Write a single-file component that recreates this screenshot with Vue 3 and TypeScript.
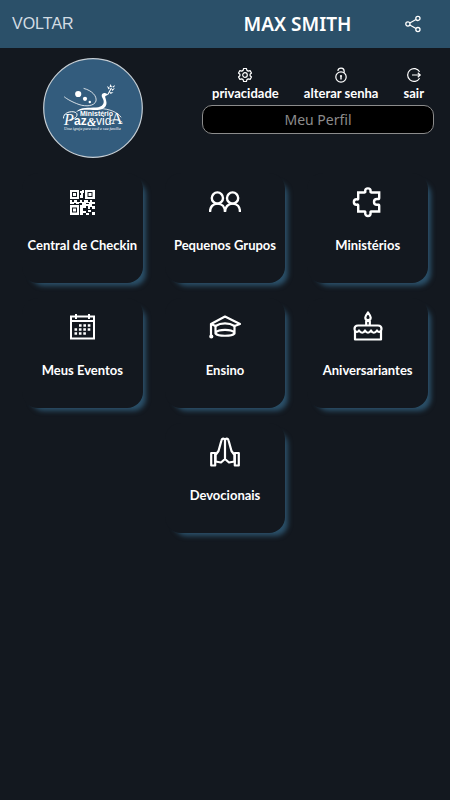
<script setup lang="ts">
type IconName = 'qr' | 'group' | 'puzzle' | 'calendar' | 'cap' | 'cake' | 'pray'

interface MenuItem {
  icon: IconName
  label: string
}

const items: MenuItem[] = [
  { icon: 'qr', label: 'Central de Checkin' },
  { icon: 'group', label: 'Pequenos Grupos' },
  { icon: 'puzzle', label: 'Ministérios' },
  { icon: 'calendar', label: 'Meus Eventos' },
  { icon: 'cap', label: 'Ensino' },
  { icon: 'cake', label: 'Aniversariantes' },
  { icon: 'pray', label: 'Devocionais' },
]
</script>

<template>
  <div class="page">
    <header class="bar">
      <button class="back" type="button">VOLTAR</button>
      <h1 class="title">MAX SMITH</h1>
      <button class="share" type="button" aria-label="Compartilhar">
        <svg width="16" height="18" viewBox="0 0 16 18" fill="none" stroke="currentColor" stroke-width="1.3">
          <circle cx="2.9" cy="9" r="2.1" />
          <circle cx="12.9" cy="3.4" r="2.1" />
          <circle cx="12.9" cy="14.6" r="2.1" />
          <path d="M4.8 8L11 4.5M4.8 10L11 13.5" />
        </svg>
      </button>
    </header>

    <main>
      <section class="profile">
        <svg class="logo" viewBox="0 0 100 100" role="img" aria-label="Ministério Paz e Vida">
          <circle cx="50" cy="50" r="49.3" fill="#335c7d" stroke="#c4cdd4" stroke-width="1.2" />
          <g fill="#fff">
            <circle cx="35.2" cy="36" r="3.1" />
            <circle cx="42" cy="40.8" r="2.1" />
            <circle cx="46.800" cy="44" r="1.2" />
            <path d="M33 54C38 48.500 46 50 53 49.500C60 49 62 45 60 41C57.500 37 59 35 62 35L65.500 36.500L62.500 38C61.500 38.500 63.500 42 63.500 45C63.500 51 57 52.500 50 52C43 51.500 38 51.500 33 54Z" />
            <path d="M64.500 36L68 29.500L69 30L65.500 36.500ZM65.500 31.500L64 28L67 30ZM66.500 29L67.500 26L69 29ZM68.500 31.500L72 30L69.500 33ZM66.500 34L70.500 34.500L67.500 36ZM69 29L72 27L71 29.500Z" />
          </g>
          <g fill="none" stroke="#fff" stroke-linecap="round">
            <path d="M41 30.500C49 32.500 54 38 53 43C51.500 48 43 49 36 46.500C29 44 24 41 21.500 39" stroke-width=".8" />
            <path d="M20.500 60C20 53 33 52 34 56C34.500 60 29 61.500 27 61.500" stroke-width="1" />
            <path d="M57 50.500C67 51 74 54 78 59" stroke-width=".8" />
            <path d="M66 64C68 61 74 61 79 64" stroke-width=".8" />
          </g>
          <g fill="#fff">
            <text x="37" y="58" class="logo-small">Ministério</text>
            <text x="21" y="67" class="logo-script">P</text>
            <text x="31" y="67" class="logo-name">az</text>
            <text x="44" y="68" class="logo-amp">&amp;</text>
            <text x="53" y="67" class="logo-vid">vid</text>
            <text x="68" y="66" class="logo-end">A</text>
            <text x="21" y="72" class="logo-tag">Uma igreja para você e sua família</text>
          </g>
        </svg>
        <div class="account">
          <nav class="actions">
            <a href="#privacidade">
              <svg width="16" height="16" viewBox="0 0 16 16" fill="none" stroke="currentColor" stroke-width="1.2" stroke-linejoin="round">
                <path d="M6.600 1.500H9.400L9.900 3.400L11.200 4.100L13.100 3.600L14.500 6L13.100 7.300V8.700L14.500 10L13.100 12.400L11.200 11.900L9.900 12.600L9.400 14.500H6.600L6.100 12.600L4.800 11.900L2.900 12.400L1.500 10L2.900 8.700V7.300L1.500 6L2.900 3.600L4.800 4.100L6.100 3.400Z" />
                <circle cx="8" cy="8" r="2.300" />
              </svg>
              <span>privacidade</span>
            </a>
            <a href="#senha">
              <svg width="16" height="16" viewBox="0 0 16 16" fill="none" stroke="currentColor" stroke-width="1.200">
                <circle cx="8" cy="10" r="5.200" />
                <path d="M4.800 3.800C5.500 .2 11.200 .2 11.200 4.400V5.800" />
                <path d="M8 9.500V12.500" stroke-width="1.400" />
                <circle cx="8" cy="9" r="1.100" fill="currentColor" stroke="none" />
              </svg>
              <span>alterar senha</span>
            </a>
            <a href="#sair">
              <svg width="16" height="16" viewBox="0 0 16 16" fill="none" stroke="currentColor" stroke-width="1.200">
                <path d="M13.600 4.800A6.400 6.400 0 1 0 13.600 11.200" />
                <path d="M6 8H14M11.800 5.800L14.200 8L11.800 10.200" />
              </svg>
              <span>sair</span>
            </a>
          </nav>
          <button class="profile-button" type="button">Meu Perfil</button>
        </div>
      </section>

      <nav class="menu">
        <a v-for="item in items" :key="item.icon" class="card" href="#">
          <svg class="icon" viewBox="0 0 32 32" fill="none" stroke="currentColor" stroke-width="2.4">
            <g v-if="item.icon === 'qr'" fill="currentColor" stroke="none">
              <path fill-rule="evenodd" d="M4 4H13V13H4ZM6 6V11H11V6ZM7 7H10V10H7ZM19 4H29V13H19ZM21.500 6V11H26.500V6ZM22.500 7H25.500V10H22.500ZM4 19H13V29H4ZM6 21.500V26.500H11V21.500ZM7 22.500H10V25.500H7Z" />
              <path d="M14 5H16V4H18V7H17V12H14V9H15V7H14ZM4 14H6V16H8V14H11V16H14V14H16V16H18V14H22V16H24V14H26V16H29V18H26V20H29V23H26V21H24V23H22V20H20V22H17V25H20V27H17V29H14V19H16V17H13V18H10V17H8V18H4ZM20 17V18H23V17ZM22 24H25V26H22ZM26 26H29V29H26ZM20 27H23V29H20Z" />
            </g>
            <g v-else-if="item.icon === 'group'">
              <circle cx="8.400" cy="12" r="5.600" />
              <circle cx="23.600" cy="12" r="5.600" />
              <path d="M1 26C1 20.800 4 17.600 8.400 17.600S16 20.800 16 26C16 20.800 19.200 17.600 23.600 17.600S31 20.800 31 26" />
            </g>
            <path v-else-if="item.icon === 'puzzle'" d="M6.200 6.500H12.500C13.800 6.500 13.200 5.500 13.200 4.800C13.200 1.500 18.600 1.500 18.600 4.800C18.600 5.500 18 6.500 19.300 6.500H27.200V12.300C27.200 13.500 26 13 25 13C21 13 21 18.800 25 18.800C26 18.800 27.200 18.300 27.200 19.500V25.500H19.300C18 25.500 18.600 26.500 18.600 27.200C18.600 31 13.200 31 13.200 27.200C13.200 26.500 13.800 25.500 12.500 25.500H6.200V19.300C6.200 18.100 5.300 18.700 4.500 18.700C1 18.700 1 13.300 4.500 13.300C5.300 13.300 6.200 13.900 6.200 12.700Z" />
            <g v-else-if="item.icon === 'calendar'">
              <path d="M5 5.500H28V27.500H5ZM5 10H28" stroke-width="2" />
              <path d="M10 3V8M23 3V8" stroke-width="2" />
              <path d="M13 14.500H26M8.500 18.500H26M8.500 22.500H20" stroke-dasharray="2.600 1.800" />
            </g>
            <g v-else-if="item.icon === 'cap'" stroke-linejoin="round" stroke-width="2.2">
              <path d="M2 13L16 5.500L31 13L25.500 15C20 11.500 12 11.500 6.500 15Z" />
              <path d="M6.500 15V22.500C9 25.500 23 25.500 25.500 22.500V15M6.500 21.500C10 18 22 18 25.500 21.500M2 13V24.500" />
              <circle cx="2.300" cy="25.500" r="1" fill="currentColor" />
            </g>
            <g v-else-if="item.icon === 'cake'" stroke-linejoin="round" stroke-width="2.2">
              <path d="M6 14.500H26C28.500 14.500 29.500 16 29.500 18C29.500 21 26.500 21.800 25 19.500C23 22.500 20.500 22.500 19 19.500C17 22.500 15 22.500 13 19.500C11.500 22.500 9 22.500 7 19.500C5.500 21.800 2.500 21 2.500 18C2.500 16 3.500 14.500 6 14.500Z" />
              <path d="M3 20V28.500H29V20M14.200 14V10H17.800V14" />
              <path d="M16 1.500C14.500 3.500 13.300 5 13.300 6.500C13.300 10 18.700 10 18.700 6.500C18.700 5 17.500 3.500 16 1.500Z" />
            </g>
            <g v-else stroke-linejoin="round" stroke-width="2.2">
              <path d="M16 4C17 1.800 19 2.300 19.500 4.300L22.500 15L25.500 19V25.500L20 26.500L16 23L12 26.500L6.500 25.500V19L9.500 15L12.500 4.300C13 2.300 15 1.800 16 4ZM16 4V23" />
              <path d="M2.200 17H6.200V29.500H2.200ZM25.800 17H29.800V29.500H25.800Z" />
            </g>
          </svg>
          <span>{{ item.label }}</span>
        </a>
      </nav>
    </main>
  </div>
</template>

<style>
html,
body {
  margin: 0;
  background: #13181f;
}
</style>

<style scoped>
.page {
  min-height: 100vh;
  background: #13181f;
  color: #fff;
  font-family: Lato, "Noto Sans", sans-serif;
}

button {
  margin: 0;
  padding: 0;
  border: 0;
  background: none;
  color: inherit;
  font: inherit;
  cursor: pointer;
}

a {
  color: inherit;
  text-decoration: none;
}

svg {
  display: block;
}

.bar {
  display: grid;
  grid-template-columns: 190px 1fr 45px;
  align-items: center;
  height: 48px;
  background: #2b5069;
}

.back {
  justify-self: start;
  padding-left: 12px;
  color: #d3dce3;
  font-family: "Liberation Sans", sans-serif;
  font-size: 16px;
  line-height: 20px;
}

.title {
  margin: 0;
  text-align: center;
  font-family: "Noto Sans", sans-serif;
  font-size: 19px;
  font-weight: 600;
  line-height: 28px;
}

.share {
  justify-self: start;
}

.profile {
  display: grid;
  grid-template-columns: 186fr 232fr;
  column-gap: 16px;
  align-items: start;
  padding: 10px 16px 0 0;
}

.logo {
  justify-self: center;
  width: 100px;
  height: 100px;
}

.logo-small {
  font: bold 7px "Liberation Sans", sans-serif;
}

.logo-script {
  font: italic 16px "Liberation Serif", serif;
}

.logo-name {
  font: bold 12px "Liberation Sans", sans-serif;
}

.logo-amp {
  font: italic bold 12px "Liberation Serif", serif;
}

.logo-vid {
  font: 12px "Liberation Sans", sans-serif;
}

.logo-end {
  font: 16px "Liberation Serif", serif;
}

.logo-tag {
  font: italic 4px "Liberation Serif", serif;
}

.account {
  padding-top: 9px;
}

.actions {
  display: flex;
  justify-content: space-between;
  padding: 0 10px;
}

.actions a {
  display: flex;
  flex-direction: column;
  align-items: center;
  gap: 2px;
  font-size: 13px;
  font-weight: 700;
  line-height: 16px;
}

.profile-button {
  width: 100%;
  height: 29px;
  margin-top: 4px;
  border: 1px solid #8c8c8c;
  border-radius: 10px;
  background: #000;
  color: #8c8c8c;
  font-family: "Noto Sans", sans-serif;
  font-size: 14px;
  line-height: 20px;
}

.menu {
  display: grid;
  grid-template-columns: repeat(3, 1fr);
  gap: 15px 22px;
  padding: 15px 22px;
}

.card {
  display: flex;
  flex-direction: column;
  align-items: center;
  gap: 18px;
  height: 110px;
  padding-top: 13px;
  box-sizing: border-box;
  border-radius: 16px;
  background: #13181f;
  box-shadow: 6px 6px 5px -3px #2b5069;
  font-size: 13px;
  font-weight: 700;
  line-height: 18px;
  white-space: nowrap;
}

.card:last-child {
  grid-column: 2;
}

.icon {
  width: 32px;
  height: 32px;
}
</style>
